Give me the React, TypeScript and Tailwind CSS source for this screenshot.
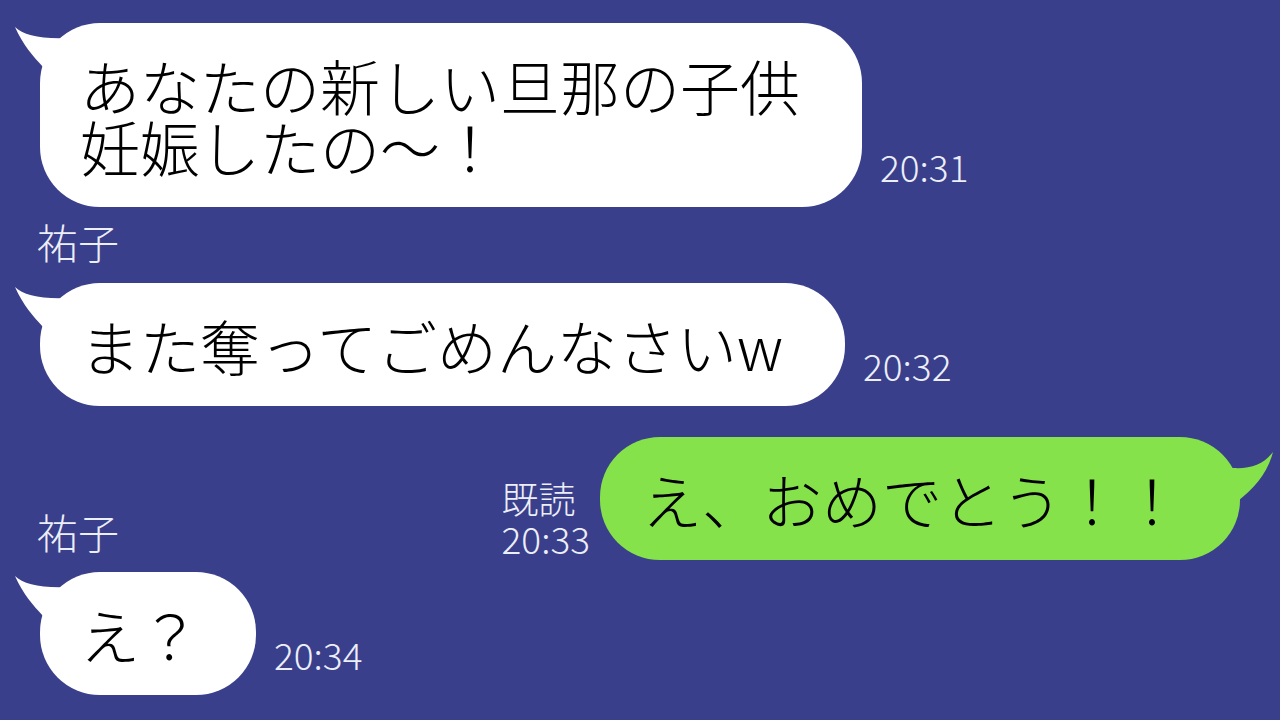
import React from 'react';

const FONT = {
  fontFamily: '"Noto Sans CJK JP Light", "Noto Sans CJK JP DemiLight", "Noto Sans CJK JP", "Noto Sans", sans-serif',
};

const LeftTail = () => (
  <svg width="70" height="70" viewBox="0 0 70 70" className="absolute left-[-25px] top-0">
    <path d="M0,4 C8,12 25,16 52,15 L70,15 L70,50 L28,44 C18,33 8,22 0,4 Z" fill="#ffffff" />
  </svg>
);

const RightTail = () => (
  <svg width="70" height="80" viewBox="0 0 70 80" className="absolute right-[-35px] top-0">
    <path d="M68,15 C58,28 45,32 28,31 L0,31 L0,70 L33,64 C48,52 62,38 68,15 Z" fill="#86e24b" />
  </svg>
);

const Stamp = ({ children }: { children: React.ReactNode }) => (
  <div className="text-[37px] leading-none font-light text-[#eceef8] mb-[22px]">{children}</div>
);

const LeftMessage = ({ lines, time, short }: { lines: string[]; time: string; short?: boolean }) => (
  <div className="flex items-end gap-[18px]">
    <div className={`relative bg-white rounded-[60px] pl-[40px] py-[31px] ${short ? 'pr-[56px]' : 'pr-[62px]'}`}>
      <LeftTail />
      <div className="relative text-[60px] leading-[61px] font-light text-black whitespace-nowrap">
        {lines.map(l => (
          <div key={l}>{l}</div>
        ))}
      </div>
    </div>
    <Stamp>{time}</Stamp>
  </div>
);

const Name = ({ children }: { children: React.ReactNode }) => (
  <div className="w-fit text-[41px] leading-none font-light text-[#eceef8] ml-[37px]">{children}</div>
);

export default function App() {
  return (
    <div className="w-[1280px] h-[720px] overflow-hidden bg-[#393f8b] pt-[23px] px-[40px]" style={FONT}>
      <LeftMessage lines={['あなたの新しい旦那の子供', '妊娠したの〜！']} time="20:31" />
      <div className="mt-[14px] -ml-[40px]">
        <Name>祐子</Name>
      </div>
      <div className="mt-[21px]">
        <LeftMessage lines={['また奪ってごめんなさいw']} time="20:32" />
      </div>
      <div className="mt-[31px] flex justify-end items-end gap-[10px]">
        <div className="text-[37px] leading-[40px] font-light text-[#eceef8] mb-[2px]">
          <div>既読</div>
          <div>20:33</div>
        </div>
        <div className="relative bg-[#86e24b] rounded-[60px] pl-[42px] pr-[58px] py-[31px]">
          <RightTail />
          <div className="relative text-[60px] leading-[61px] font-light text-black whitespace-nowrap">
            え、おめでとう！！
          </div>
        </div>
      </div>
      <div className="-mt-[49px] -ml-[40px]">
        <Name>祐子</Name>
      </div>
      <div className="mt-[20px]">
        <LeftMessage lines={['え？']} time="20:34" short />
      </div>
    </div>
  );
}
